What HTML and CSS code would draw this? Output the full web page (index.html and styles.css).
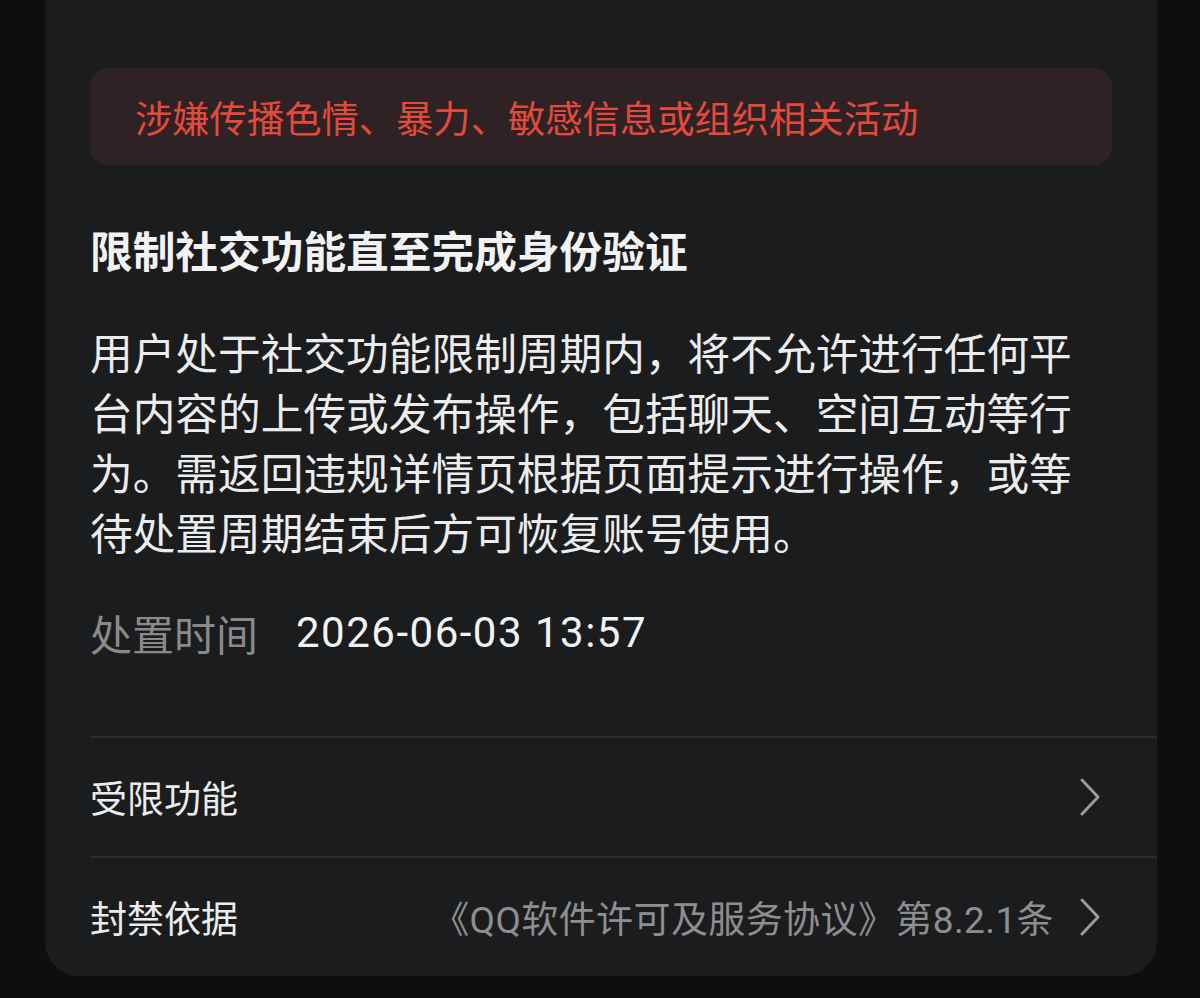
FILE: index.html
```html
<!DOCTYPE html>
<html lang="zh-CN">
<head>
  <meta charset="UTF-8">
  <title>违规详情</title>
  <link rel="stylesheet" href="styles.css">
</head>
<body>
  <div class="card">
    <div class="reason">涉嫌传播色情、暴力、敏感信息或组织相关活动</div>

    <h2 class="title">限制社交功能直至完成身份验证</h2>
    <p class="desc">用户处于社交功能限制周期内，将不允许进行任何平台内容的上传或发布操作，包括聊天、空间互动等行为。需返回违规详情页根据页面提示进行操作，或等待处置周期结束后方可恢复账号使用。</p>

    <div class="time-row">
      <span class="time-label">处置时间</span>
      <span class="time-value">2026-06-03 13:57</span>
    </div>

    <ul class="list">
      <li class="row">
        <span class="row-label">受限功能</span>
        <span class="row-right">
          <svg class="chevron" viewBox="0 0 20 38"><path d="M2 2 L18 19 L2 36"/></svg>
        </span>
      </li>
      <li class="row">
        <span class="row-label">封禁依据</span>
        <span class="row-right">
          <span class="row-value">《QQ软件许可及服务协议》第8.2.1条</span>
          <svg class="chevron" viewBox="0 0 20 38"><path d="M2 2 L18 19 L2 36"/></svg>
        </span>
      </li>
    </ul>
  </div>
</body>
</html>
```

FILE: styles.css
```css
body {
  margin: 0;
  background-color: #0e0e10;
  font-family: "Noto Sans CJK SC", "Noto Sans", sans-serif;
  color: #ececec;
}
.card {
  width: 1112px;
  margin-left: 45px;
  padding-top: 68px;
  background-color: #1b1c1e;
  border-radius: 0 0 34px 34px;
  box-sizing: border-box;
}
.reason {
  margin: 0 45px;
  height: 97px;
  padding-left: 45px;
  display: flex;
  align-items: center;
  background-color: #2e2224;
  border-radius: 18px;
  color: #e34a3c;
  font-size: 37.3px;
}
.title {
  margin: 54px 45px 0;
  font-size: 42.7px;
  line-height: 60px;
  font-weight: 700;
  color: #f2f2f2;
}
.desc {
  margin: 42px 45px 0;
  font-size: 42.7px;
  line-height: 60px;
  color: #ececec;
}
.time-row {
  margin: 42px 45px 0;
  display: flex;
  gap: 38px;
  line-height: 60px;
}
.time-label {
  font-size: 42px;
  color: #8a8a8c;
}
.time-value {
  font-family: Roboto, "Noto Sans CJK SC", sans-serif;
  font-size: 42px;
  letter-spacing: 1.5px;
  color: #f2f2f2;
}
.list {
  list-style: none;
  margin: 73px 0 0 45px;
  padding: 0;
}
.row {
  height: 120px;
  border-top: 2px solid #2a2b2e;
  box-sizing: border-box;
  display: flex;
  align-items: center;
  justify-content: space-between;
  padding-right: 57px;
}
.row-label {
  font-size: 37px;
  color: #ececec;
}
.row-right {
  display: flex;
  align-items: center;
  gap: 26px;
}
.row-value {
  font-family: Roboto, "Noto Sans CJK SC", sans-serif;
  font-size: 37px;
  letter-spacing: 0.4px;
  color: #8e8e90;
}
.chevron {
  width: 20px;
  height: 38px;
  fill: none;
  stroke: #9a9a9c;
  stroke-width: 3;
  stroke-linecap: round;
  stroke-linejoin: round;
}
```
